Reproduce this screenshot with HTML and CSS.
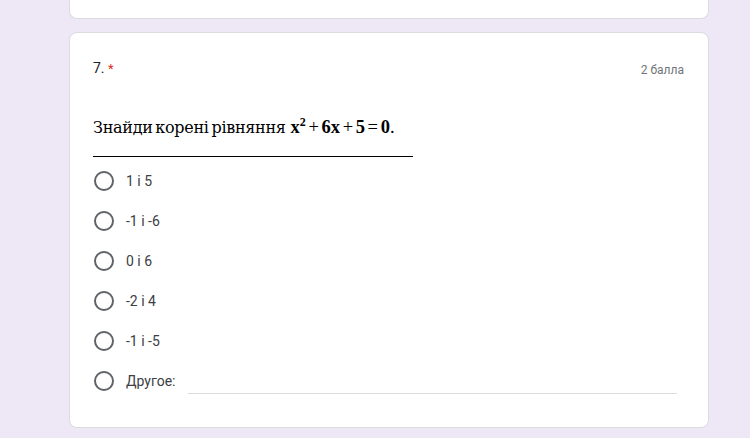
FILE: index.html
```html
<!DOCTYPE html>
<html lang="uk">

<head>
    <meta charset="UTF-8">
    <meta name="viewport" content="width=device-width, initial-scale=1.0">
    <title>Питання 7</title>
    <link rel="stylesheet" href="styles.css">
</head>

<body>
    <div class="form">
        <div class="card card-prev"></div>
        <div class="card">
            <div class="q-head">
                <div class="q-title">7. <span class="req">*</span></div>
                <div class="q-points">2 балла</div>
            </div>
            <div class="q-image"><span class="q-words">Знайди корені рівняння</span><span class="q-math"><b>x<sup>2</sup></b> + <b>6x</b> + <b>5</b> = <b>0</b>.</span></div>
            <ul class="options">
                <li><span class="radio"></span><span class="label">1 і 5</span></li>
                <li><span class="radio"></span><span class="label">-1 і -6</span></li>
                <li><span class="radio"></span><span class="label">0 і 6</span></li>
                <li><span class="radio"></span><span class="label">-2 і 4</span></li>
                <li><span class="radio"></span><span class="label">-1 і -5</span></li>
                <li><span class="radio"></span><span class="label">Другое:</span><span class="other"></span></li>
            </ul>
        </div>
    </div>
</body>

</html>
```

FILE: styles.css
```css
* {
    padding: 0;
    margin: 0;
    box-sizing: border-box;
}

ul {
    list-style: none;
}

body {
    background: #ede7f6;
    font-family: Roboto, "Noto Sans", Arial, sans-serif;
    color: #202124;
}

.form {
    width: 640px;
    margin-left: 69px;
}

.card {
    background: #fff;
    border: 1px solid #dadce0;
    border-radius: 8px;
    padding: 23px 24px 26px 23px;
    margin-top: 13px;
}

.card-prev {
    height: 19px;
    margin-top: 0;
    padding: 0;
    border-top: none;
    border-radius: 0 0 8px 8px;
}

.q-head {
    display: flex;
    justify-content: space-between;
    align-items: center;
    height: 24px;
}

.q-title {
    font-size: 14px;
}

.req {
    color: #d93025;
    font-size: 13px;
}

.q-points {
    font-size: 12px;
    color: #70757a;
    padding-top: 4px;
}

.q-image {
    width: 320px;
    height: 42px;
    margin-top: 35px;
    padding-bottom: 17px;
    border-bottom: 1px solid #000;
    font-family: "Liberation Serif", "Times New Roman", serif;
    font-size: 18.5px;
    line-height: 24px;
    color: #000;
    white-space: nowrap;
}

.q-words {
    font-family: "DejaVu Serif", serif;
    font-size: 16px;
    letter-spacing: -0.3px;
    word-spacing: -2px;
}

.q-math {
    margin-left: 5px;
    word-spacing: -2px;
}

.q-image sup {
    font-size: 12px;
    line-height: 0;
}

.options {
    margin-top: 4px;
}

.options li {
    display: flex;
    align-items: center;
    height: 40px;
}

.radio {
    width: 20px;
    height: 20px;
    border: 2px solid #5f6368;
    border-radius: 50%;
    margin-left: 1px;
    flex-shrink: 0;
}

.label {
    font-size: 14px;
    margin-left: 12px;
    color: #3c4043;
}

.other {
    flex: 1;
    height: 1px;
    background: #dadce0;
    margin: 24px 7px 0 13px;
}
```
